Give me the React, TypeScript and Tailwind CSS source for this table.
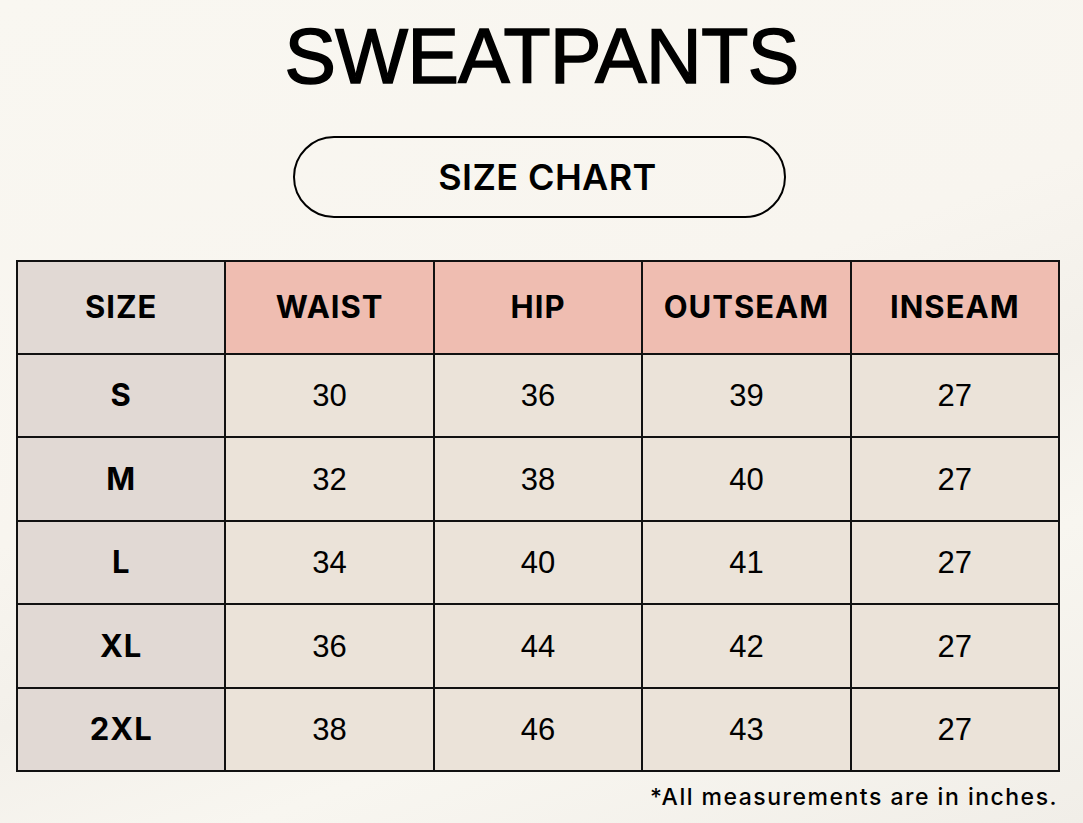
const headers = ['WAIST', 'HIP', 'OUTSEAM', 'INSEAM']

const rows: { size: string; values: number[] }[] = [
  { size: 'S', values: [30, 36, 39, 27] },
  { size: 'M', values: [32, 38, 40, 27] },
  { size: 'L', values: [34, 40, 41, 27] },
  { size: 'XL', values: [36, 44, 42, 27] },
  { size: '2XL', values: [38, 46, 43, 27] },
]

export default function App() {
  return (
    <div className="flex h-[823px] w-[1083px] flex-col items-center overflow-hidden bg-[linear-gradient(160deg,#f9f7f1_0%,#f8f5ef_45%,#f3f0ea_60%,#f8f6f0_75%,#f1eee8_100%)] font-['Liberation_Sans',Arial,sans-serif] text-black">
      <h1 className="mt-[18px] text-[77px] leading-none tracking-[-0.5px] [-webkit-text-stroke:1.6px_black]">
        SWEATPANTS
      </h1>

      <div className="mt-[41px] ml-[293px] flex h-[82px] w-[493px] items-center justify-center self-start rounded-full border-2 border-black pl-[16px]">
        <span className="font-['Inter',sans-serif] text-[36px] font-semibold tracking-[0.4px]">SIZE CHART</span>
      </div>

      <div className="mt-[42px] ml-[16px] grid h-[512px] w-[1044px] grid-cols-5 grid-rows-[91px_repeat(5,1fr)] gap-[2px] self-start border-2 border-[#111] bg-[#111]">
        <div className="flex items-center justify-center bg-[#e1d9d4] font-['Inter',sans-serif] text-[31px] font-bold tracking-[1px]">
          SIZE
        </div>
        {headers.map((h) => (
          <div
            key={h}
            className="flex items-center justify-center bg-[#efbdb1] font-['Inter',sans-serif] text-[31px] font-bold tracking-[1px]"
          >
            {h}
          </div>
        ))}
        {rows.map((r) => (
          <div key={r.size} className="contents">
            <div className="flex items-center justify-center bg-[#e1d9d4] font-['Inter',sans-serif] text-[31px] font-bold tracking-[1px]">
              {r.size}
            </div>
            {r.values.map((v, i) => (
              <div key={i} className="flex items-center justify-center bg-[#ebe3d9] pt-[2px] text-[31px]">
                {v}
              </div>
            ))}
          </div>
        ))}
      </div>

      <p className="mt-[8px] self-end pr-[25px] font-['Inter',sans-serif] text-[23px] font-medium tracking-[1.5px]">
        *All measurements are in inches.
      </p>
    </div>
  )
}
